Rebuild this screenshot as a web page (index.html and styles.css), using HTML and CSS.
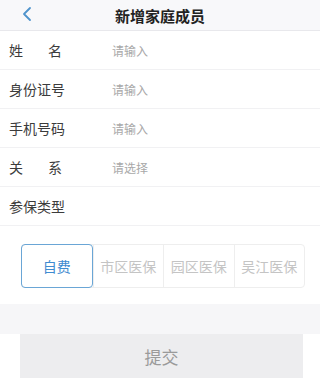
FILE: index.html
```html
<!DOCTYPE html>
<html lang="zh">
<head>
<meta charset="utf-8">
<link rel="stylesheet" href="styles.css">
</head>
<body>
<div class="page">
  <header class="bar">
    <span class="back">
      <svg width="12" height="16" viewBox="0 0 12 16"><path d="M9 2 L3 8 L9 14" fill="none" stroke="#4f93cc" stroke-width="1.8" stroke-linecap="round" stroke-linejoin="round"/></svg>
    </span>
    <h1 class="title">新增家庭成员</h1>
  </header>
  <div class="row"><span class="label spread"><i>姓</i><i>名</i></span><span class="ph">请输入</span></div>
  <div class="row"><span class="label">身份证号</span><span class="ph">请输入</span></div>
  <div class="row"><span class="label">手机号码</span><span class="ph">请输入</span></div>
  <div class="row"><span class="label spread"><i>关</i><i>系</i></span><span class="ph">请选择</span></div>
  <div class="row"><span class="label">参保类型</span></div>
  <div class="opts-wrap">
    <div class="opts">
      <div class="opt sel">自费</div>
      <div class="opt">市区医保</div>
      <div class="opt">园区医保</div>
      <div class="opt">吴江医保</div>
    </div>
  </div>
  <div class="band"></div>
  <div class="foot"><div class="btn">提交</div></div>
</div>
</body>
</html>
```
FILE: styles.css
```css
* { box-sizing: border-box; margin: 0; padding: 0; }
html, body { width: 320px; height: 378px; overflow: hidden; background: #fff; }
body { font-family: "Noto Sans CJK SC", "Noto Sans", sans-serif; color: #3a3a3a; }
.bar { height: 31px; background: #f8f8fa; border-bottom: 1px solid #e8e8ec; display: flex; align-items: center; justify-content: center; position: relative; }
.back { position: absolute; left: 21px; top: 6px; width: 12px; height: 16px; display: flex; }
.title { font-size: 15px; font-weight: bold; color: #222; line-height: 1; }
.row { height: 39px; border-bottom: 1px solid #f1f1f3; display: flex; align-items: center; padding-left: 9px; }
.label { width: 103px; font-size: 14px; color: #3c3c3c; display: flex; }
.label.spread { width: 103px; }
.label.spread i { font-style: normal; }
.label.spread i + i { margin-left: 25px; margin-right: auto; }
.label.spread::after { content: ""; }
.ph { font-size: 12px; color: #a8a8a8; }
.opts-wrap { height: 78px; padding: 18px 0 0 21px; }
.opts { display: flex; width: 284px; height: 44px; border: 1px solid #eeeeee; border-radius: 4px; }
.opt { flex: 1; display: flex; align-items: center; justify-content: center; font-size: 14px; color: #c4c4c4; border-left: 1px solid #eeeeee; }
.opt:first-child { border-left: none; }
.opt.sel { border: 1px solid #6aa6d6; border-radius: 4px; color: #3f8bd0; margin: -1px 0 -1px -1px; }
.band { height: 30px; background: #f6f6f8; }
.foot { height: 45px; padding: 0 17px 0 20px; }
.btn { height: 45px; background: #ededef; color: #9a9a9a; font-size: 17px; display: flex; align-items: center; justify-content: center; }
```
